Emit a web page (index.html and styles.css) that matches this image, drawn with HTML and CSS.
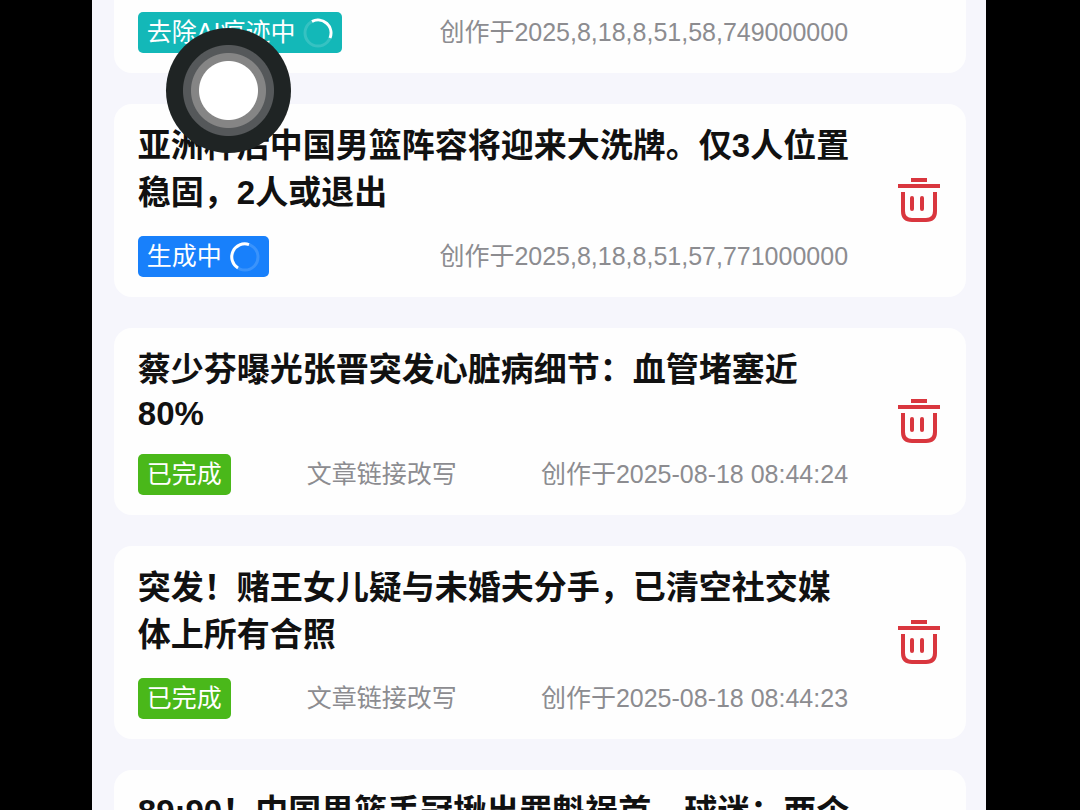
FILE: index.html
```html
<!DOCTYPE html>
<html lang="zh-CN">
<head>
  <meta charset="UTF-8">
  <meta name="viewport" content="width=device-width, initial-scale=1.0">
  <title>创作记录</title>
  <link rel="stylesheet" href="styles.css">
</head>
<body>
  <svg class="sprite" aria-hidden="true">
    <symbol id="icon-trash" viewBox="0 0 44 46">
      <g fill="none" stroke="#d9363e" stroke-width="4">
        <path d="M15 3H31" />
        <path d="M2 9H44" />
        <path d="M7 15V34Q7 43 16 43H30Q39 43 39 34V15" />
        <path d="M16 21V32M26 21V32" stroke-linecap="round" />
      </g>
    </symbol>
  </svg>

  <main class="screen">
    <article class="card card-top">
      <div class="card-body">
        <div class="meta">
          <span class="badge teal">去除AI痕迹中
            <svg class="spinner" viewBox="0 0 30 30"><circle class="track" cx="15" cy="15" r="13" /><path class="arc" d="M9 3.5A13 13 0 0 1 27 20" /></svg>
          </span>
          <time class="time">创作于2025,8,18,8,51,58,749000000</time>
        </div>
      </div>
    </article>

    <article class="card">
      <div class="card-body">
        <h2 class="title"><span>亚洲杯后中国男篮阵容将迎来大洗牌。仅3人位置</span><span>稳固，2人或退出</span></h2>
        <div class="meta">
          <span class="badge blue">生成中
            <svg class="spinner" viewBox="0 0 30 30"><circle class="track" cx="15" cy="15" r="13" /><path class="arc" d="M19 2.6A13 13 0 0 0 8 26" /></svg>
          </span>
          <time class="time">创作于2025,8,18,8,51,57,771000000</time>
        </div>
      </div>
      <button class="delete" aria-label="删除"><svg><use href="#icon-trash" /></svg></button>
    </article>

    <article class="card">
      <div class="card-body">
        <h2 class="title"><span>蔡少芬曝光张晋突发心脏病细节：血管堵塞近</span><span class="latin">80%</span></h2>
        <div class="meta">
          <span class="badge green">已完成</span>
          <span class="type">文章链接改写</span>
          <time class="time">创作于2025-08-18 08:44:24</time>
        </div>
      </div>
      <button class="delete" aria-label="删除"><svg><use href="#icon-trash" /></svg></button>
    </article>

    <article class="card">
      <div class="card-body">
        <h2 class="title"><span>突发！赌王女儿疑与未婚夫分手，已清空社交媒</span><span>体上所有合照</span></h2>
        <div class="meta">
          <span class="badge green">已完成</span>
          <span class="type">文章链接改写</span>
          <time class="time">创作于2025-08-18 08:44:23</time>
        </div>
      </div>
      <button class="delete" aria-label="删除"><svg><use href="#icon-trash" /></svg></button>
    </article>

    <article class="card">
      <div class="card-body">
        <h2 class="title"><span>89:90！中国男篮丢冠揪出罪魁祸首，球迷：两个</span></h2>
      </div>
    </article>

    <div class="touch"></div>
  </main>
</body>
</html>
```

FILE: styles.css
```css
* {
  margin: 0;
  padding: 0;
  box-sizing: border-box;
}

body {
  font-family: "Liberation Sans", "Noto Sans CJK SC", sans-serif;
  background: #000;
  height: 100vh;
  overflow: hidden;
  padding: 0 8.7% 0 8.5%;
}

.sprite {
  display: none;
}

.screen {
  position: relative;
  height: 100vh;
  overflow: hidden;
  background: #f6f6fc;
  padding: 0 20px 0 22px;
  display: flex;
  flex-direction: column;
  gap: 31px;
}

.card {
  flex: none;
  display: flex;
  align-items: center;
  background: #fefefe;
  border-radius: 18px;
  padding: 18px 26px 20px 24px;
}

.card-top {
  padding-top: 12px;
  border-top-left-radius: 0;
  border-top-right-radius: 0;
}

.card-body {
  flex: 1;
  min-width: 0;
}

.title {
  font-size: 33px;
  line-height: 47px;
  font-weight: bold;
  color: #111;
  white-space: nowrap;
  margin-bottom: 20px;
}

.title span {
  display: block;
}

.title .latin {
  line-height: 41px;
}

.meta {
  display: flex;
  align-items: center;
  font-size: 25px;
  line-height: 41px;
  color: #8c8c90;
  white-space: nowrap;
}

.card-top .meta {
  padding-right: 44px;
}

.badge {
  display: flex;
  align-items: center;
  gap: 8px;
  height: 41px;
  padding: 0 9px;
  border-radius: 5px;
  color: #fff;
}

.teal {
  background: #13b8b8;
}

.blue {
  background: #1880fb;
}

.green {
  background: #4ab81a;
}

.spinner {
  width: 30px;
  height: 30px;
  fill: none;
  stroke: #fff;
  stroke-width: 3;
}

.track {
  opacity: 0.15;
}

.type {
  margin-left: 76px;
}

.time {
  margin-left: auto;
  margin-right: 48px;
}

.delete {
  width: 44px;
  height: 46px;
  border: none;
  background: none;
  cursor: pointer;
}

.delete svg {
  display: block;
  width: 44px;
  height: 46px;
}

/* touch pointer floating over the list */
.touch {
  position: absolute;
  top: 28px;
  left: 74px;
  width: 125px;
  height: 125px;
  border-radius: 50%;
  background: radial-gradient(circle, #fff 29px, #858585 30px, #858585 37px, #55585a 38px, #55585a 45px, #1f2424 46px);
}
```
